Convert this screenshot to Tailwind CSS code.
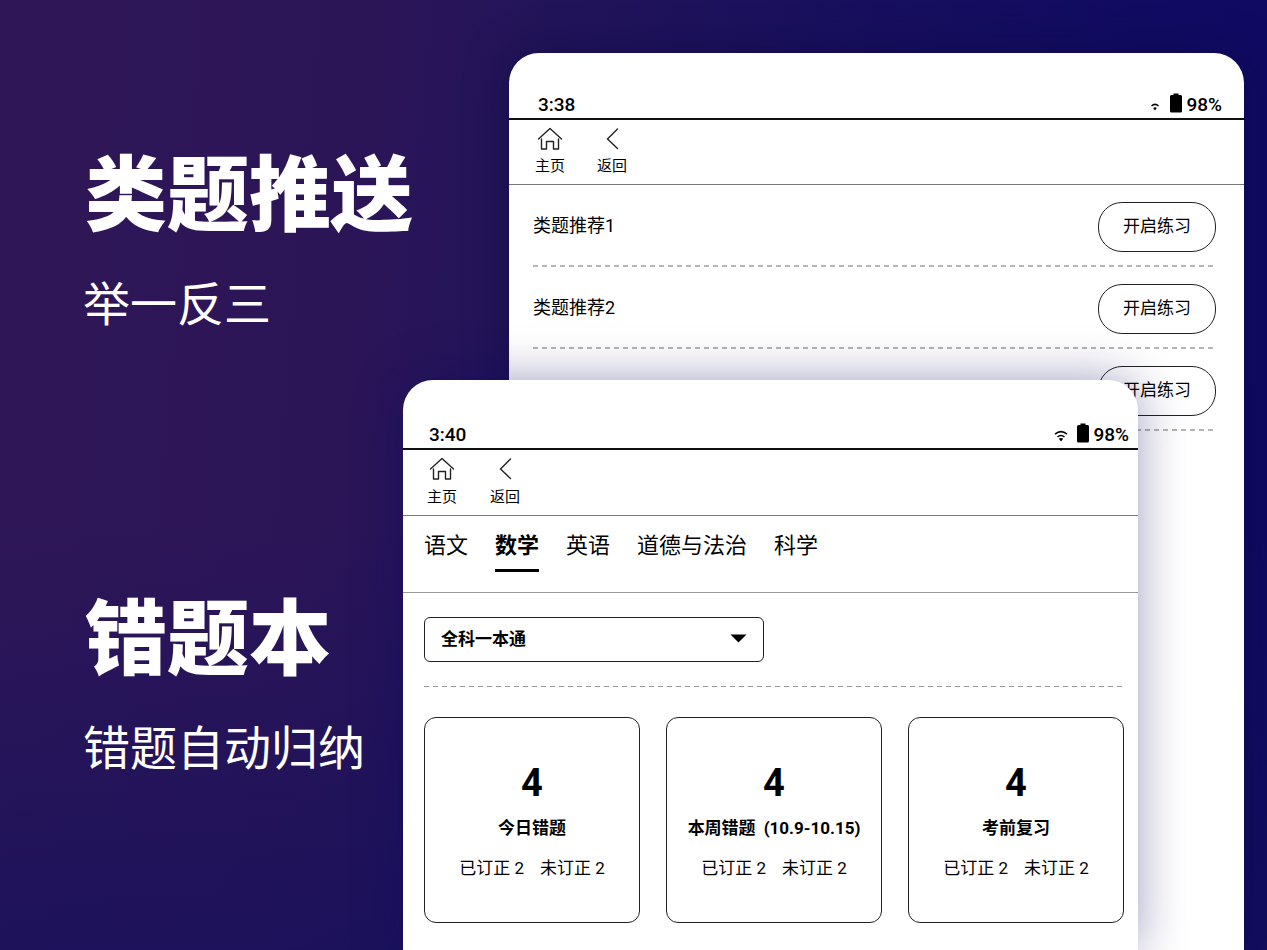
<!DOCTYPE html>
<html lang="zh-CN">
<head>
    <meta charset="UTF-8">
    <meta name="viewport" content="width=device-width, initial-scale=1.0">
    <title>错题本</title>
    <script src="https://cdn.jsdelivr.net/npm/@tailwindcss/browser@4"></script>
</head>
<body class="bg-[#231458] font-['Roboto','Noto_Sans_CJK_SC',sans-serif] text-black">
    <svg class="hidden">
        <symbol id="home" viewBox="0 0 26 24">
            <path d="M1.5 12 L13 1.5 L24.5 12 M4.5 12 V22 H9.5 V14.5 H16.5 V22 H21.5 V12" fill="none" stroke="#222" stroke-width="1.4" stroke-linejoin="round" stroke-linecap="round"/>
        </symbol>
        <symbol id="back" viewBox="0 0 26 24">
            <path d="M18.5 2 L8.5 12 L18.5 21.5" fill="none" stroke="#222" stroke-width="1.4" stroke-linecap="round"/>
        </symbol>
        <symbol id="wifi" viewBox="0 0 14 12">
            <path d="M1 4.2 Q7 -0.8 13 4.2 M3.5 7 Q7 4 10.5 7" fill="none" stroke="#000" stroke-width="1.6"/>
            <path d="M4.8 8.8 Q7 7.2 9.2 8.8 L7 11.4 Z"/>
        </symbol>
        <symbol id="wifi-low" viewBox="0 0 8 8">
            <path d="M0.5 3 Q4 -0.2 7.5 3" fill="none" stroke="#000" stroke-width="1.5"/>
            <path d="M2.2 5 Q4 3.6 5.8 5 L4 7.4 Z"/>
        </symbol>
        <symbol id="battery" viewBox="0 0 12 20">
            <path d="M3.5 0.5 H8.5 V2 H10.5 Q12 2 12 3.5 V18 Q12 19.5 10.5 19.5 H1.5 Q0 19.5 0 18 V3.5 Q0 2 1.5 2 H3.5 Z"/>
        </symbol>
    </svg>

    <main class="grid h-screen min-h-[950px] grid-cols-[403fr_106fr_629fr_106fr_23fr] grid-rows-[380px_minmax(0,1fr)] overflow-hidden bg-[linear-gradient(to_top,rgba(22,16,92,0.7)_0%,rgba(22,16,92,0)_45%),linear-gradient(95deg,#2f1757_0%,#2c1557_26%,#22145a_42%,#170f5e_65%,#110b62_85%,#0f0a62_100%)]">
        <section class="col-start-1 col-end-3 row-start-1 min-w-0 pt-[155px] pl-[83px] whitespace-nowrap text-white">
            <h1 class="pl-[2px] text-[82px] leading-[82px] font-black">类题推送</h1>
            <p class="mt-11 text-[47px] leading-[48px]">举一反三</p>
        </section>
        <section class="col-start-1 row-start-2 min-w-0 pt-[219px] pl-[83px] whitespace-nowrap text-white">
            <h2 class="pl-[2px] text-[82px] leading-[82px] font-black">错题本</h2>
            <p class="mt-11 text-[47px] leading-[48px]">错题自动归纳</p>
        </section>

        <!-- recommended exercises -->
        <section class="col-start-3 col-end-5 row-start-1 row-end-3 mt-[53px] min-w-0 rounded-t-[30px] bg-white shadow-[0_0_40px_rgba(10,8,60,0.5)]">
            <div class="flex h-[67px] items-end border-b-2 border-[#111] pr-[22px] pb-[2px] pl-[29px] text-[19px] leading-[22px] font-medium">
                <span>3:38</span>
                <div class="ml-auto flex items-end">
                    <svg class="mr-[11px] mb-[5px] size-2"><use href="#wifi-low"/></svg>
                    <svg class="mr-1 mb-[3px] h-5 w-3"><use href="#battery"/></svg>
                    <span>98%</span>
                </div>
            </div>
            <nav class="flex h-[65px] gap-8 border-b border-[#777] pt-[7px] pl-[26px] text-[15px] leading-5">
                <a href="#" class="flex flex-col items-center gap-[5px]"><svg class="h-6 w-[26px]"><use href="#home"/></svg>主页</a>
                <a href="#" class="flex flex-col items-center gap-[5px]"><svg class="h-6 w-[26px]"><use href="#back"/></svg>返回</a>
            </nav>
            <ul class="pr-[28px] pl-6 text-[17px]">
                <li>
                    <div class="flex h-20 items-center">
                        <span class="text-[18px]">类题推荐1</span>
                        <button class="mt-1 ml-auto h-[50px] w-[118px] rounded-[24px] border border-[#222]">开启练习</button>
                    </div>
                    <div class="h-[2px] bg-[repeating-linear-gradient(90deg,#b5b5b5_0_5px,transparent_5px_9px)]"></div>
                </li>
                <li>
                    <div class="flex h-20 items-center">
                        <span class="text-[18px]">类题推荐2</span>
                        <button class="mt-1 ml-auto h-[50px] w-[118px] rounded-[24px] border border-[#222]">开启练习</button>
                    </div>
                    <div class="h-[2px] bg-[repeating-linear-gradient(90deg,#b5b5b5_0_5px,transparent_5px_9px)]"></div>
                </li>
                <li>
                    <div class="flex h-20 items-center">
                        <button class="mt-1 ml-auto h-[50px] w-[118px] rounded-[24px] border border-[#222]">开启练习</button>
                    </div>
                    <div class="h-[2px] bg-[repeating-linear-gradient(90deg,#b5b5b5_0_5px,transparent_5px_9px)]"></div>
                </li>
            </ul>
        </section>

        <!-- mistake notebook -->
        <section class="z-10 col-start-2 col-end-4 row-start-2 min-w-0 rounded-t-[30px] bg-white shadow-[0_0_50px_rgba(16,10,94,0.4)]">
            <div class="flex h-[70px] items-end border-b-2 border-[#111] pr-[9px] pb-[2px] pl-[26px] text-[19px] leading-[22px] font-medium">
                <span>3:40</span>
                <div class="ml-auto flex items-end">
                    <svg class="mr-[9px] mb-1 h-3 w-3.5"><use href="#wifi"/></svg>
                    <svg class="mr-1 mb-[3px] h-5 w-3"><use href="#battery"/></svg>
                    <span>98%</span>
                </div>
            </div>
            <nav class="flex h-[66px] gap-[33px] border-b border-[#777] pt-[7px] pl-6 text-[15px] leading-5">
                <a href="#" class="flex flex-col items-center gap-[6px]"><svg class="h-6 w-[26px]"><use href="#home"/></svg>主页</a>
                <a href="#" class="flex flex-col items-center gap-[6px]"><svg class="h-6 w-[26px]"><use href="#back"/></svg>返回</a>
            </nav>
            <nav class="flex h-[77px] items-start gap-[27px] border-b border-[#999] pt-[14px] pl-[21px] text-[22px] leading-8 whitespace-nowrap">
                <a href="#">语文</a>
                <a href="#" class="border-b-3 border-black pb-[7px] font-bold">数学</a>
                <a href="#">英语</a>
                <a href="#">道德与法治</a>
                <a href="#">科学</a>
            </nav>
            <div class="pt-6 pr-[14px] pl-[21px]">
                <div class="relative w-[340px]">
                    <select aria-label="教材" class="h-[45px] w-full appearance-none rounded-md border border-[#222] bg-white pl-4 text-[17px] font-bold">
                        <option>全科一本通</option>
                    </select>
                    <svg class="pointer-events-none absolute top-[17px] right-[17px] h-[9px] w-[17px]" viewBox="0 0 17 9"><path d="M0.5 0.5 H16.5 L8.5 8.5 Z"/></svg>
                </div>
                <div class="mt-6 h-px bg-[repeating-linear-gradient(90deg,#999_0_5px,transparent_5px_9px)]"></div>
                <div class="mt-[30px] grid grid-cols-3 gap-[26px] text-center text-[17px] leading-6 whitespace-nowrap">
                    <article class="h-[206px] rounded-xl border border-[#222] pt-[43px]">
                        <p class="text-[38px] leading-[44px] font-bold">4</p>
                        <h3 class="mt-[11px] font-bold">今日错题</h3>
                        <p class="mt-4 flex justify-center gap-4"><span>已订正 2</span><span>未订正 2</span></p>
                    </article>
                    <article class="h-[206px] rounded-xl border border-[#222] pt-[43px]">
                        <p class="text-[38px] leading-[44px] font-bold">4</p>
                        <h3 class="mt-[11px] flex justify-center gap-2 font-bold"><span>本周错题</span><span>(10.9-10.15)</span></h3>
                        <p class="mt-4 flex justify-center gap-4"><span>已订正 2</span><span>未订正 2</span></p>
                    </article>
                    <article class="h-[206px] rounded-xl border border-[#222] pt-[43px]">
                        <p class="text-[38px] leading-[44px] font-bold">4</p>
                        <h3 class="mt-[11px] font-bold">考前复习</h3>
                        <p class="mt-4 flex justify-center gap-4"><span>已订正 2</span><span>未订正 2</span></p>
                    </article>
                </div>
            </div>
        </section>
    </main>
</body>
</html>
